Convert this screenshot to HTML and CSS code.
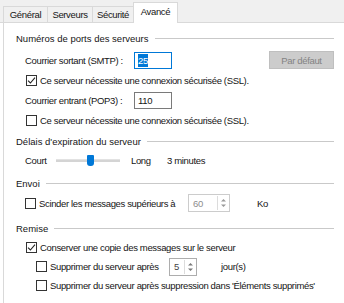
FILE: index.html
```html
<!DOCTYPE html>
<html lang="fr">
<head>
<meta charset="UTF-8" />
<title>Options avancées</title>
<link rel="stylesheet" href="styles.css">
</head>
<body>
<div class="tabs">
  <div class="tab tab-general">Général</div>
  <div class="tab tab-servers">Serveurs</div>
  <div class="tab tab-security">Sécurité</div>
  <div class="tab tab-advanced active">Avancé</div>
</div>

<div class="panel">
  <div class="group group-ports">
    <div class="group-title">Numéros de ports des serveurs</div>
    <div class="row">
      <span class="field-label">Courrier sortant (SMTP) :</span>
      <span class="text-input focused"><span class="selected">25</span></span>
      <button class="btn-default" disabled>Par défaut</button>
    </div>
    <label class="check row"><span class="box checked"><svg width="9" height="9" viewBox="0 0 9 9"><path d="M1 4.6 L3.4 7 L8 1.6" fill="none" stroke="#222" stroke-width="1.1"/></svg></span>Ce serveur nécessite une connexion sécurisée (SSL).</label>
    <div class="row">
      <span class="field-label">Courrier entrant (POP3) :</span>
      <span class="text-input">110</span>
    </div>
    <label class="check row"><span class="box"></span>Ce serveur nécessite une connexion sécurisée (SSL).</label>
  </div>

  <div class="group group-timeout">
    <div class="group-title">Délais d'expiration du serveur</div>
    <div class="row slider-row">
      <span class="slider-label short">Court</span>
      <span class="slider">
        <span class="track track-left"></span>
        <span class="thumb"></span>
        <span class="track track-right"></span>
      </span>
      <span class="slider-label long">Long</span>
      <span class="timeout-value">3 minutes</span>
    </div>
  </div>

  <div class="group group-send">
    <div class="group-title">Envoi</div>
    <div class="row">
      <label class="check split-label"><span class="box"></span>Scinder les messages supérieurs à</label>
      <span class="spin spin-size disabled">
        <span class="spin-value">60</span>
        <span class="spin-arrows"><svg width="7" height="10" viewBox="0 0 7 10"><path d="M1 3.5 L3.5 1 L6 3.5 Z M1 6.5 L3.5 9 L6 6.5 Z" fill="#9a9a9a"/></svg></span>
      </span>
      <span class="unit unit-ko">Ko</span>
    </div>
  </div>

  <div class="group group-delivery">
    <div class="group-title">Remise</div>
    <label class="check row-sm"><span class="box checked"><svg width="9" height="9" viewBox="0 0 9 9"><path d="M1 4.6 L3.4 7 L8 1.6" fill="none" stroke="#222" stroke-width="1.1"/></svg></span>Conserver une copie des messages sur le serveur</label>
    <div class="row-sm sub">
      <label class="check days-label"><span class="box"></span>Supprimer du serveur après</label>
      <span class="spin spin-days">
        <span class="spin-value">5</span>
        <span class="spin-arrows"><svg width="7" height="10" viewBox="0 0 7 10"><path d="M1 3.5 L3.5 1 L6 3.5 Z M1 6.5 L3.5 9 L6 6.5 Z" fill="#7a7a7a"/></svg></span>
      </span>
      <span class="unit unit-days">jour(s)</span>
    </div>
    <label class="check row-sm sub"><span class="box"></span>Supprimer du serveur après suppression dans 'Éléments supprimés'</label>
  </div>
</div>
</body>
</html>
```

FILE: styles.css
```css
body {
  margin: 0;
  width: 344px;
  height: 303px;
  overflow: hidden;
  background: #fff;
  font-family: "Liberation Sans", Arial, sans-serif;
  font-size: 9.5px;
  letter-spacing: -0.35px;
  color: #151515;
}
.tabs {
  display: flex;
  align-items: flex-end;
  height: 23px;
  padding-left: 3px;
  background: #f0f0f0;
  border-bottom: 1px solid #d9d9d9;
  box-sizing: border-box;
}
.tab {
  height: 16px;
  display: flex;
  align-items: center;
  justify-content: center;
  border: 1px solid #d9d9d9;
  border-bottom: none;
  border-right: none;
  background: #f0f0f0;
  box-sizing: border-box;
}
.tab-general { width: 44px; }
.tab-servers { width: 45px; }
.tab-security { width: 41px; }
.tab-advanced { width: 45px; }
.tab.active {
  height: 21px;
  margin-bottom: -1px;
  background: #fff;
  border-right: 1px solid #d9d9d9;
  padding-bottom: 3px;
}
.panel {
  margin-left: 3px;
  height: 280px;
  padding: 8px 10px 0 12px;
  border-left: 1px solid #d9d9d9;
  background: #fff;
}
.group-title {
  display: flex;
  align-items: center;
  height: 14px;
  letter-spacing: 0;
}
.group-title::after {
  content: "";
  flex: 1;
  height: 1px;
  margin-left: 6px;
  background: #c9c9c9;
}
.group-timeout { margin-top: 4px; }
.group-send { margin-top: 6px; }
.group-delivery { margin-top: 8px; }

.row {
  display: flex;
  align-items: center;
  height: 20px;
  padding-left: 9px;
}
.row-sm {
  display: flex;
  align-items: center;
  height: 19px;
  padding-left: 10px;
}
.group-ports .group-title + .row { margin-top: 5px; }
.group-timeout .row { margin-top: 2px; }
.group-send .row { margin-top: 3px; }
.group-delivery .group-title + .row-sm { margin-top: 3px; }
.row-sm.sub { padding-left: 20px; }

.field-label {
  width: 109px;
}
.text-input {
  width: 38px;
  height: 17px;
  display: flex;
  align-items: center;
  padding-left: 3px;
  border: 1px solid #7a7a7a;
  box-sizing: border-box;
}
.text-input.focused {
  border-color: #0078d7;
}
.selected {
  background: #0078d7;
  color: #fff;
  padding: 1px 0;
}
.btn-default {
  margin-left: auto;
  width: 65px;
  height: 18px;
  padding: 0;
  border: 1px solid #bfbfbf;
  background: #cccccc;
  color: #838383;
  font: inherit;
  letter-spacing: inherit;
}

.check {
  display: flex;
  align-items: center;
}
label.row { padding-left: 10px; }
.box {
  width: 11px;
  height: 11px;
  margin-right: 3px;
  border: 1px solid #333;
  box-sizing: border-box;
  background: #fff;
  display: flex;
  align-items: center;
  justify-content: center;
}

.slider-label.short { width: 31px; }
.slider {
  width: 64px;
  height: 14px;
  display: flex;
  align-items: center;
}
.track {
  height: 2px;
  background: #d4d4d4;
  border-top: 1px solid #e2e2e2;
}
.track-left { width: 31px; }
.track-right { flex: 1; }
.thumb {
  width: 7px;
  height: 11px;
  background: #0078d7;
  border-radius: 1px 1px 3px 3px;
}
.slider-label.long {
  width: 36px;
  margin-left: 11px;
}

.split-label { width: 163px; }
.days-label { width: 133px; }
.spin {
  display: flex;
  height: 18px;
  border: 1px solid #adadad;
  box-sizing: border-box;
  background: #fff;
}
.spin-value {
  flex: 1;
  display: flex;
  align-items: center;
  padding-left: 4px;
}
.spin-arrows {
  width: 10px;
  margin: 1px;
  display: flex;
  align-items: center;
  justify-content: center;
  border-left: 1px solid #dcdcdc;
}
.spin.disabled {
  border-color: #cccccc;
  color: #8d8d8d;
}
.spin-size { width: 42px; }
.spin-days {
  width: 28px;
  color: #444;
}
.unit-ko { margin-left: 27px; }
.unit-days { margin-left: 24px; }
```
